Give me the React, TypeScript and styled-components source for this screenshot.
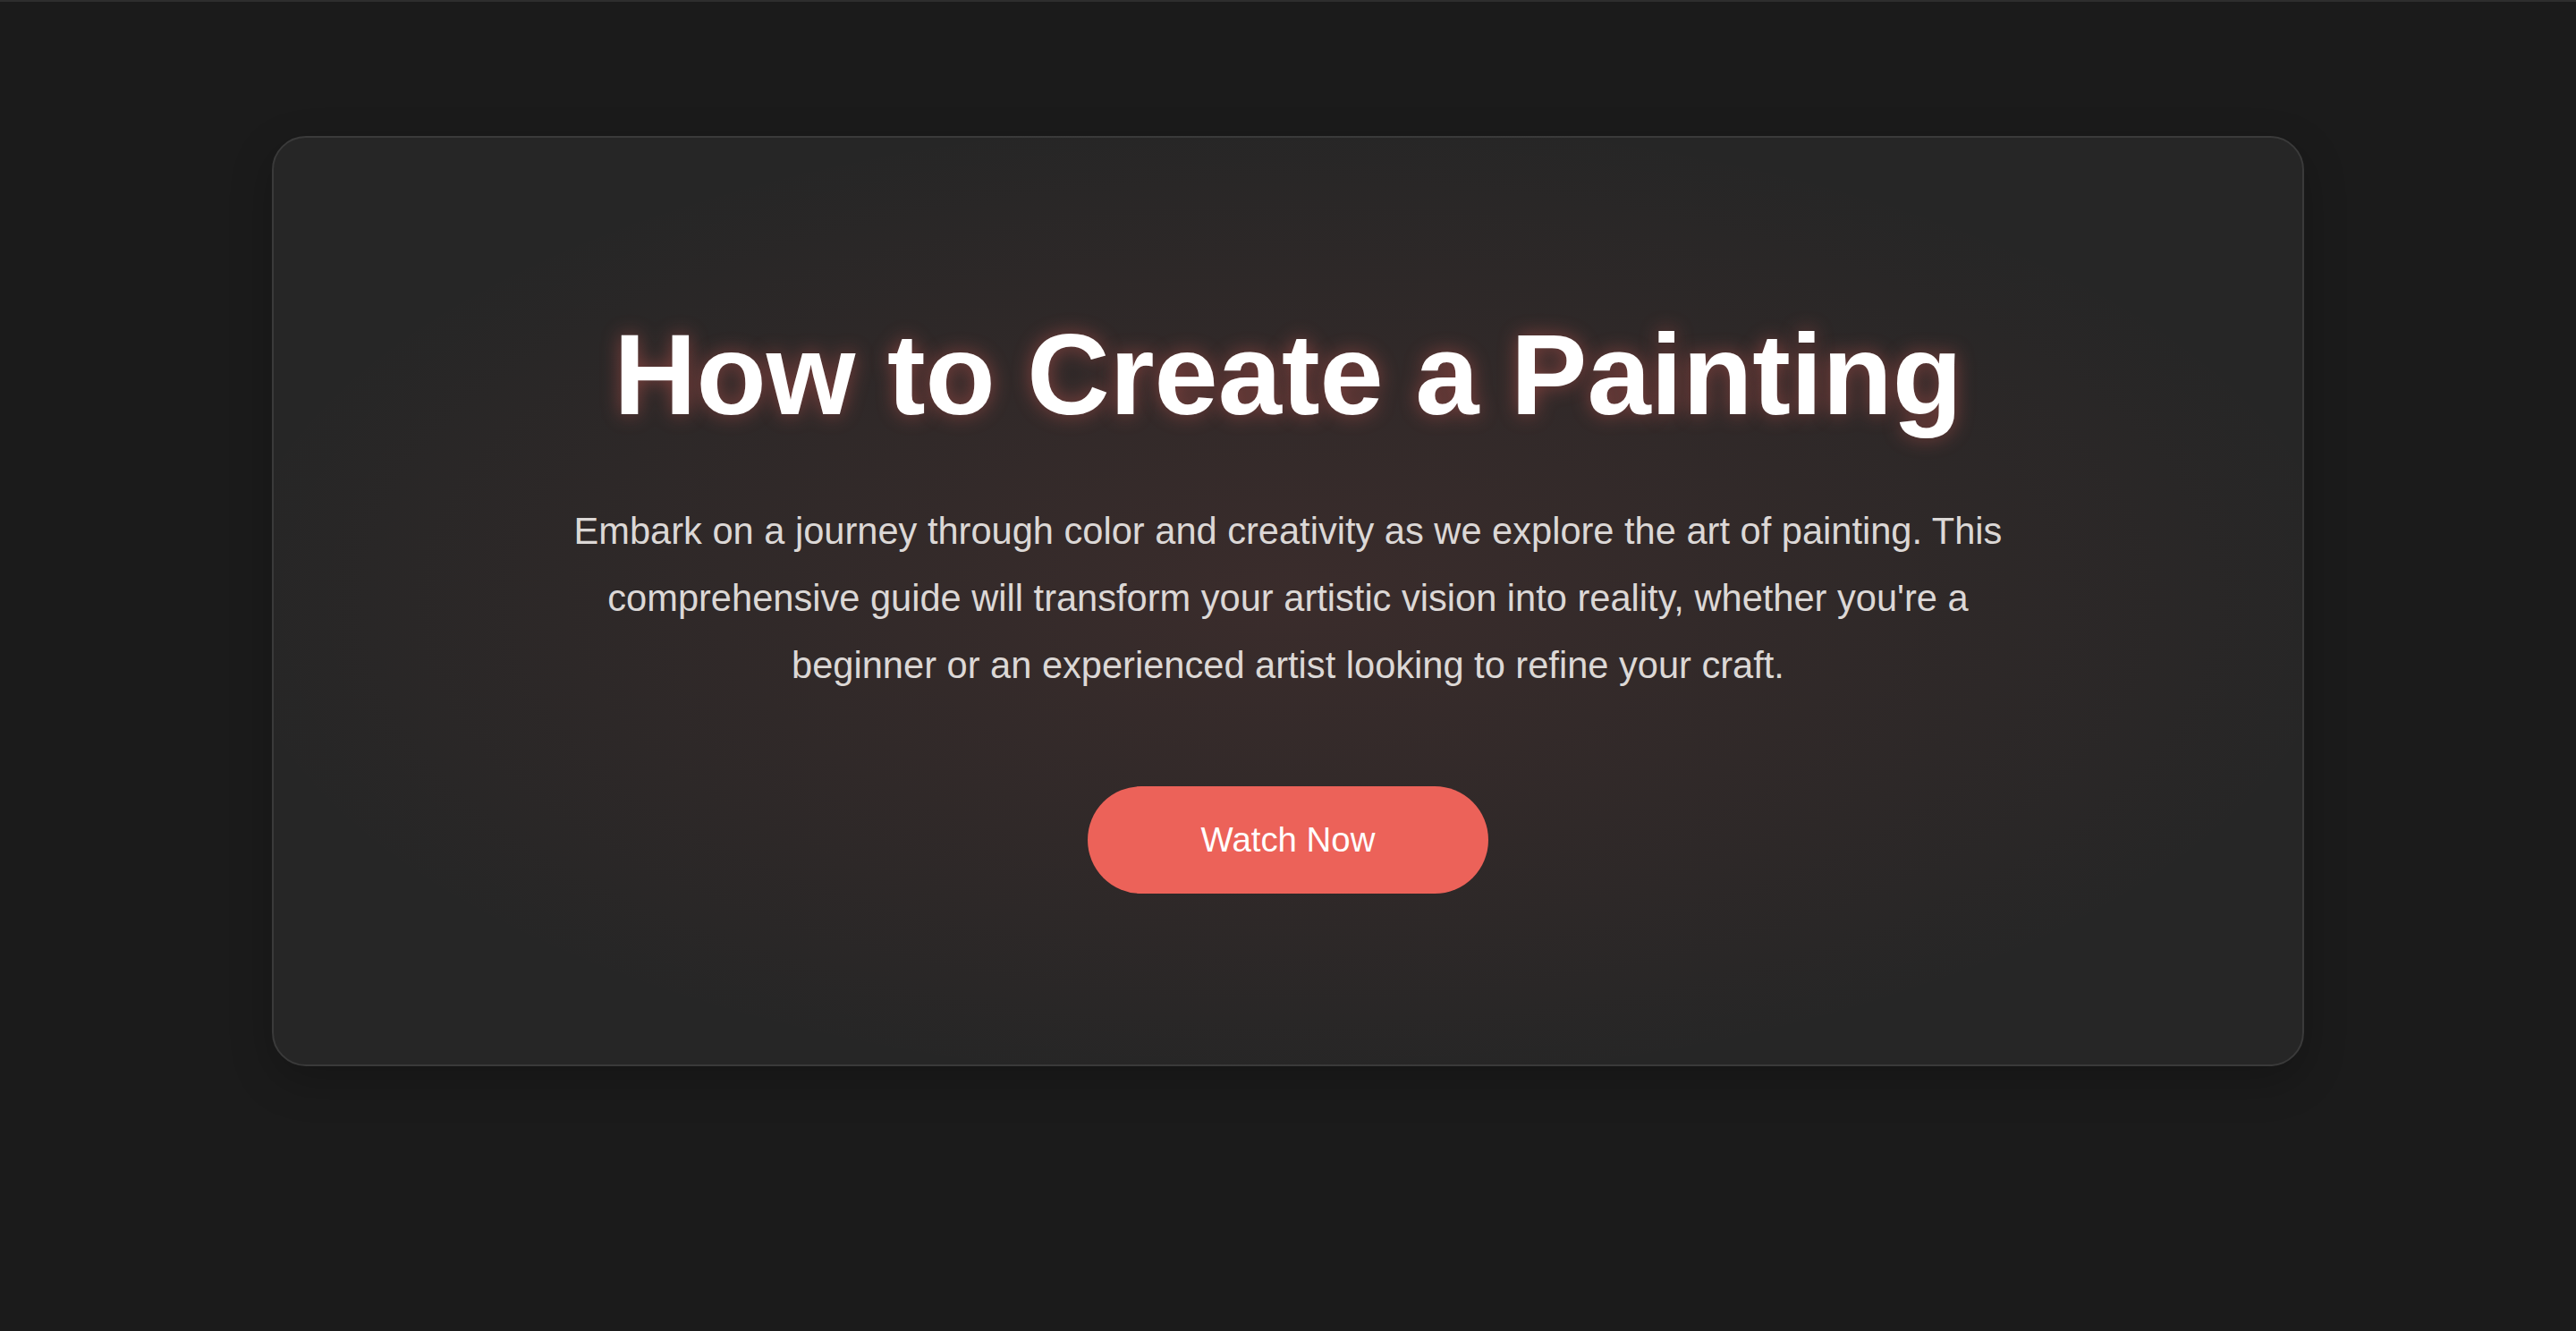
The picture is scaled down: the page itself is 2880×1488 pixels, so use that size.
import React from 'react';
import styled, { createGlobalStyle } from 'styled-components';

const GlobalStyle = createGlobalStyle`
  html, body {
    margin: 0;
    padding: 0;
    background: #1b1b1b;
  }
  body {
    font-family: 'Liberation Sans', Arial, Helvetica, sans-serif;
    -webkit-font-smoothing: antialiased;
  }
`;

const Page = styled.main`
  min-height: 1488px;
  box-sizing: border-box;
  border-top: 2px solid #2e2e2e;
  padding: 150px 304px 0;
`;

const Hero = styled.section`
  position: relative;
  box-sizing: border-box;
  max-width: 2272px;
  height: 1040px;
  margin: 0 auto;
  padding: 188px 120px 0;
  display: flex;
  flex-direction: column;
  align-items: center;
  text-align: center;
  border: 2px solid #3a3a3a;
  border-radius: 38px;
  background:
    radial-gradient(ellipse at center, rgba(236, 98, 91, 0.1) 0%, rgba(236, 98, 91, 0.045) 45%, rgba(236, 98, 91, 0) 75%),
    #262626;
  box-shadow: 0 16px 48px rgba(0, 0, 0, 0.22);
`;

const Title = styled.h1`
  margin: 0;
  font-size: 128px;
  font-weight: 700;
  line-height: 1.2;
  color: #ffffff;
  text-shadow: 0 0 22px rgba(236, 98, 91, 0.45);
`;

const Lead = styled.p`
  margin: 60px 0 0;
  max-width: 1600px;
  font-size: 41.6px;
  line-height: 1.81;
  color: #dcd8d6;
`;

const WatchButton = styled.button`
  margin-top: 98px;
  padding: 0 127px;
  height: 120px;
  border: none;
  border-radius: 999px;
  background: #ec6259;
  color: #ffffff;
  font-family: inherit;
  font-size: 38.4px;
  cursor: pointer;
`;

export default function App() {
  return (
    <>
      <GlobalStyle />
      <Page>
        <Hero>
          <Title>How to Create a Painting</Title>
          <Lead>
            Embark on a journey through color and creativity as we explore the art of
            painting. This comprehensive guide will transform your artistic vision into
            reality, whether you're a beginner or an experienced artist looking to refine
            your craft.
          </Lead>
          <WatchButton>Watch Now</WatchButton>
        </Hero>
      </Page>
    </>
  );
}
